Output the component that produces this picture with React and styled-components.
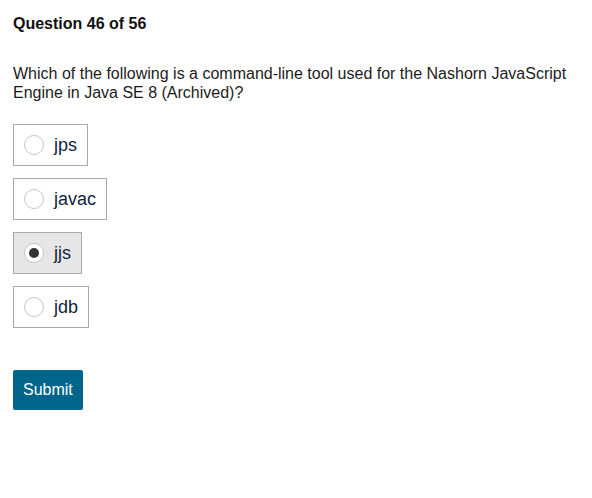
import React, { useState } from 'react';
import styled, { createGlobalStyle } from 'styled-components';

const GlobalStyle = createGlobalStyle`
  body {
    margin: 8px;
    background: #fff;
    font-family: "Liberation Sans", Arial, sans-serif;
    color: #1c1c1c;
  }
`;

const Quiz = styled.form`
  padding: 7px 5px 0;
`;

const Heading = styled.h2`
  margin: 0;
  font-size: 16px;
  line-height: 18px;
  font-weight: 700;
  color: #111;
`;

const Prompt = styled.p`
  margin: 31px 0 22px;
  font-size: 16px;
  line-height: 19px;
  color: #1c1c1c;
`;

const Options = styled.div`
  display: flex;
  flex-direction: column;
  align-items: flex-start;
  gap: 12px;
`;

const Option = styled.label`
  display: flex;
  align-items: center;
  gap: 10px;
  padding: 10px;
  border: 1px solid #a9a9a9;
  background: ${p => (p.$selected ? '#e6e6e6' : '#fff')};
  font-size: 18px;
  line-height: 20px;
  color: #10243a;
  cursor: pointer;
`;

const Radio = styled.span`
  box-sizing: border-box;
  width: 20px;
  height: 20px;
  border-radius: 50%;
  border: 1px solid #c4c4c4;
  background: #fff;
  display: flex;
  align-items: center;
  justify-content: center;

  &::after {
    content: '';
    width: 10px;
    height: 10px;
    border-radius: 50%;
    background: #333;
    display: ${p => (p.$checked ? 'block' : 'none')};
  }
`;

const SubmitButton = styled.button`
  margin-top: 42px;
  height: 40px;
  padding: 0 10px;
  border: 0;
  border-radius: 2px;
  background: #00658b;
  color: #fff;
  font-family: "Liberation Sans", Arial, sans-serif;
  font-size: 16px;
  cursor: pointer;
`;

const choices = ['jps', 'javac', 'jjs', 'jdb'];

const App = () => {
  const [picked, setPicked] = useState('jjs');

  return (
    <>
      <GlobalStyle />
      <Quiz onSubmit={e => e.preventDefault()}>
        <Heading>Question 46 of 56</Heading>
        <Prompt>
          Which of the following is a command-line tool used for the Nashorn JavaScript Engine in Java SE 8
          (Archived)?
        </Prompt>
        <Options>
          {choices.map(choice => (
            <Option key={choice} $selected={picked === choice} onClick={() => setPicked(choice)}>
              <Radio $checked={picked === choice} />
              {choice}
            </Option>
          ))}
        </Options>
        <SubmitButton type="submit">Submit</SubmitButton>
      </Quiz>
    </>
  );
};

export default App;
